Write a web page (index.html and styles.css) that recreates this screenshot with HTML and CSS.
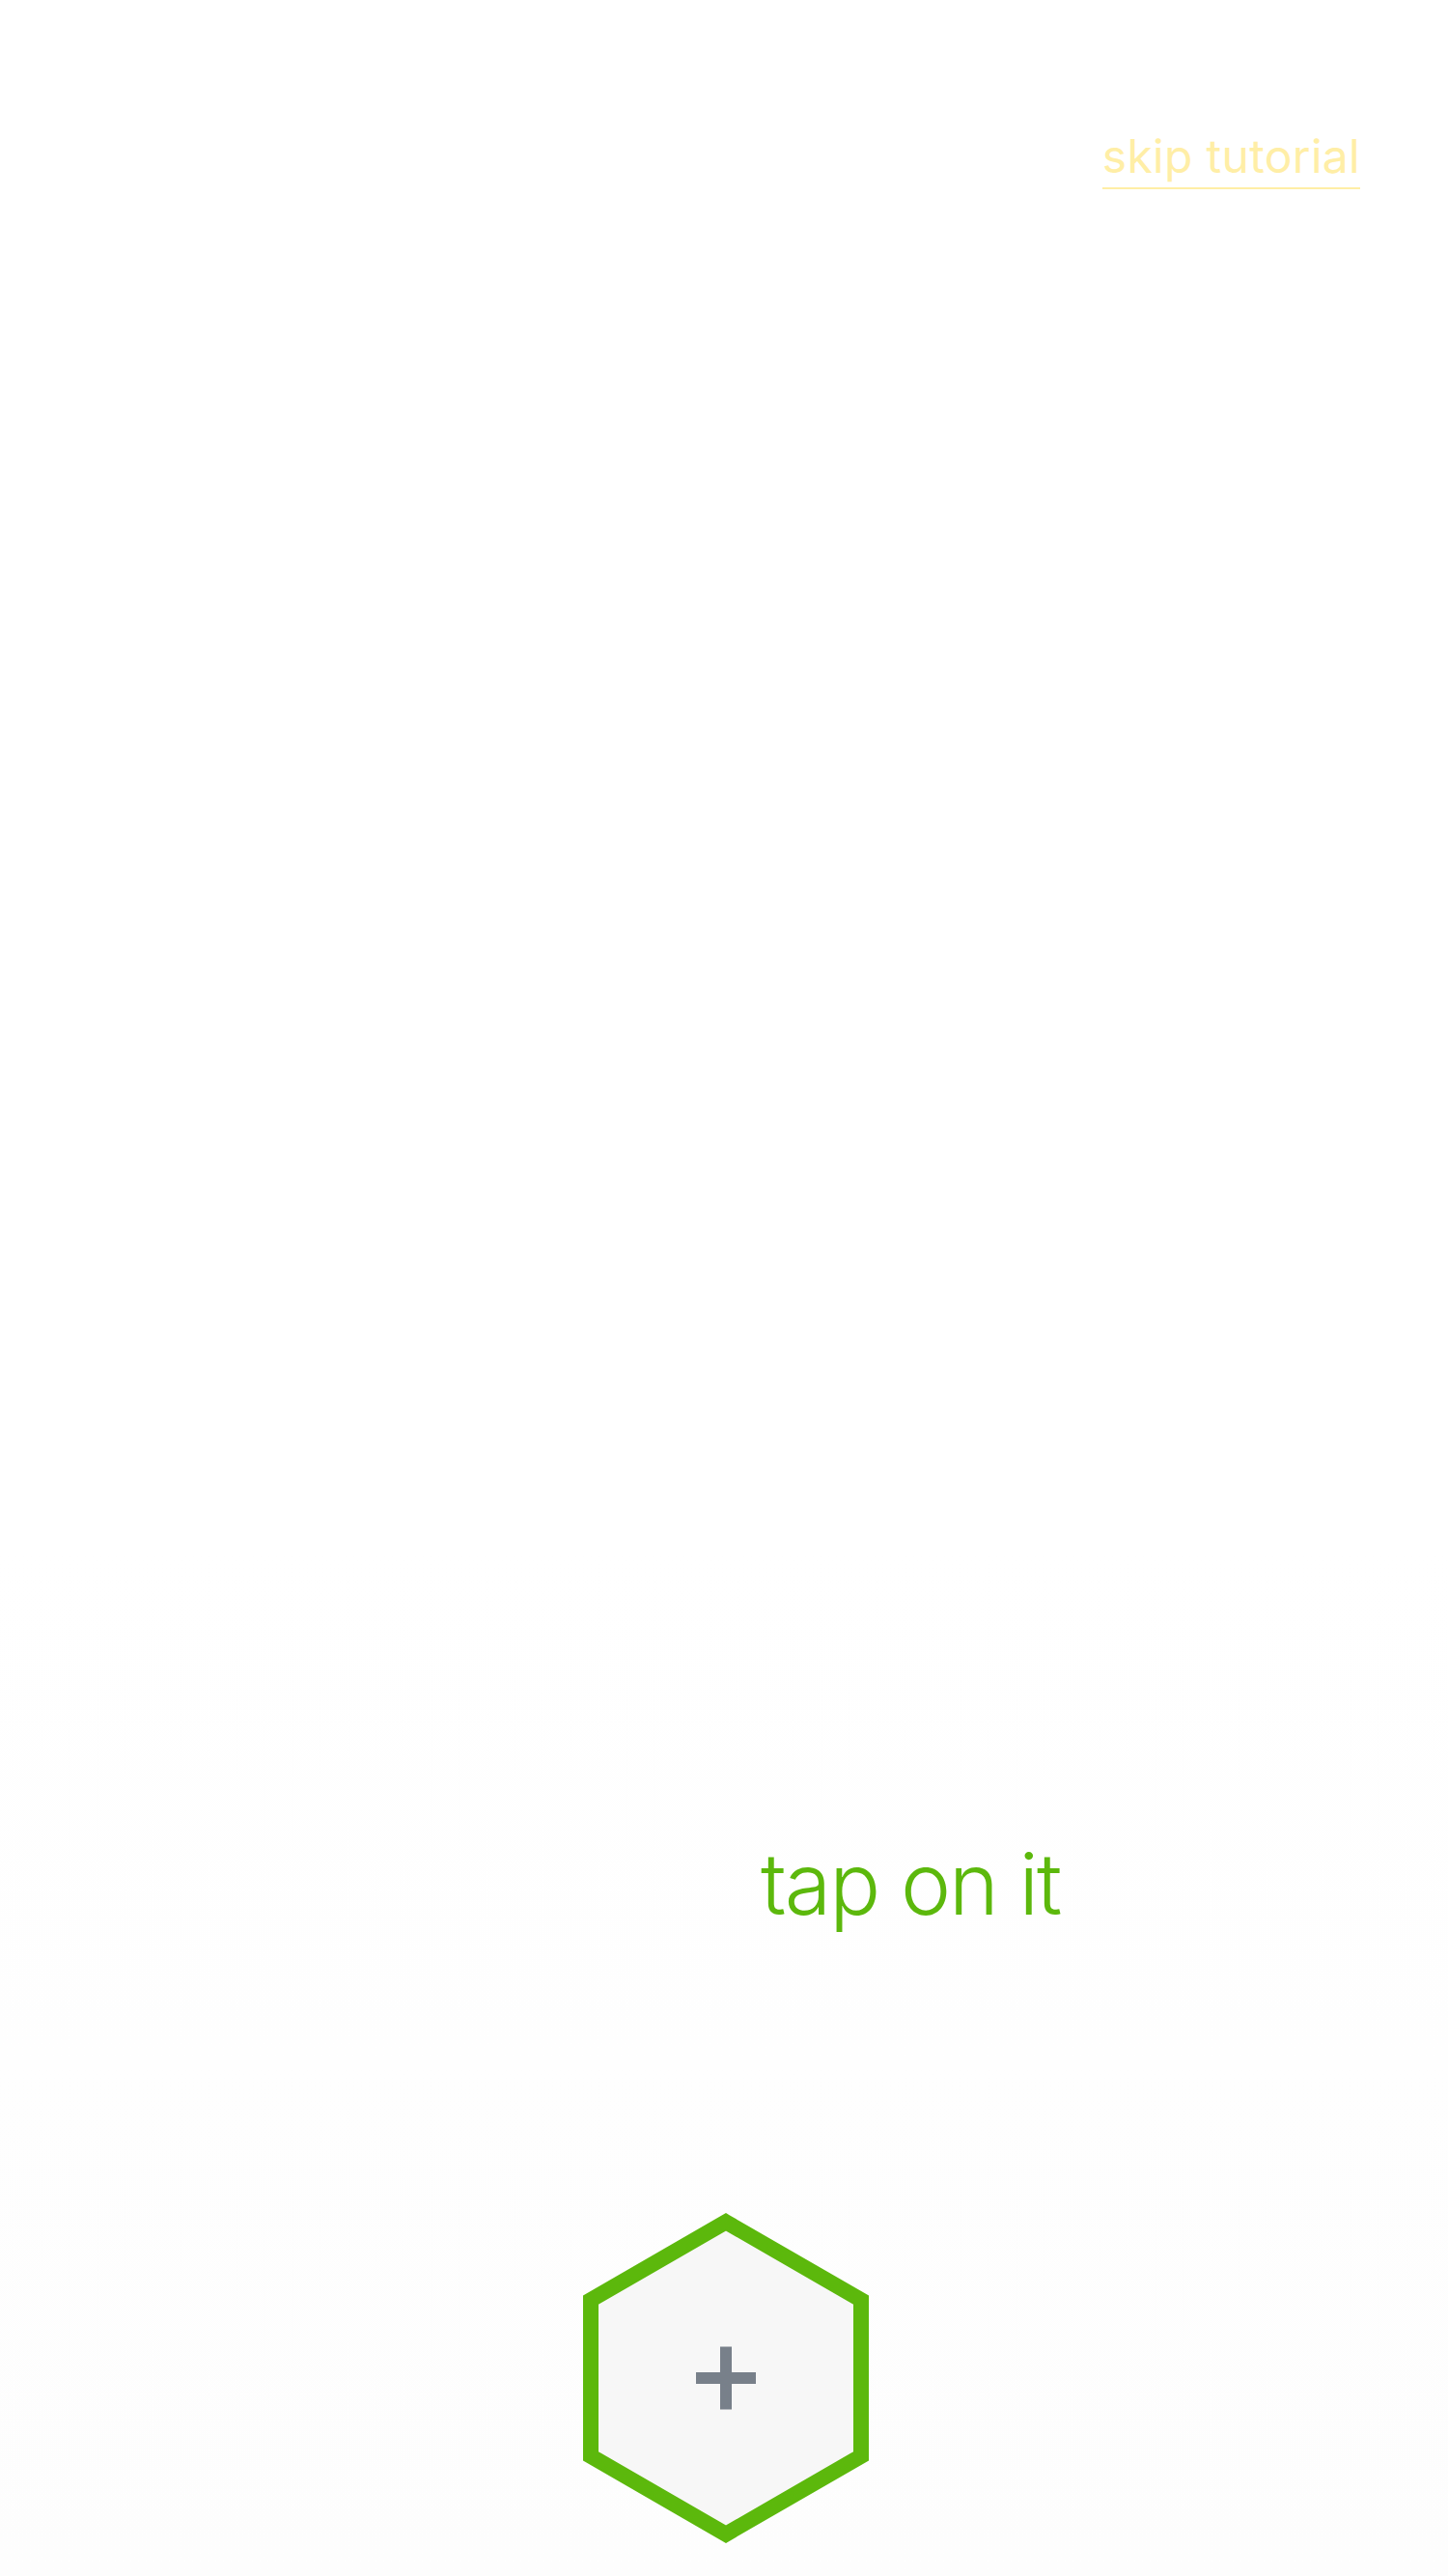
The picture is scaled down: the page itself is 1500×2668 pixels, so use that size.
FILE: index.html
```html
<!DOCTYPE html>
<html lang="en">
<head>
<meta charset="utf-8">
<title>Tutorial</title>
<link rel="stylesheet" href="styles.css">
</head>
<body>
<div class="screen">
  <header class="topbar">
    <a class="skip" href="#">skip tutorial</a>
  </header>
  <p class="hint">tap on it</p>
  <div class="hex-wrap">
    <svg class="hex" width="296" height="342" viewBox="0 0 296 342" aria-label="add">
      <polygon points="148,9.34 288,90.17 288,251.83 148,332.66 8,251.83 8,90.17" fill="#F7F7F7" stroke="#5CB80C" stroke-width="16" stroke-linejoin="miter"/>
      <rect x="117" y="165" width="62" height="12" fill="#78808A"/>
      <rect x="142" y="138.5" width="12" height="65" fill="#78808A"/>
    </svg>
  </div>
</div>
</body>
</html>
```
FILE: styles.css
```css
html, body {
  margin: 0;
  padding: 0;
  background: #ffffff;
}
.screen {
  min-height: 2668px;
  display: flex;
  flex-direction: column;
  background: linear-gradient(to bottom, #ffffff 60%, #fdfdfd 100%);
  font-family: Inter, "Noto Sans", sans-serif;
}
.topbar {
  display: flex;
  justify-content: flex-end;
  padding: 133px 91px 0 0;
}
.skip {
  font-size: 48px;
  line-height: 58px;
  font-weight: 400;
  letter-spacing: 0.3px;
  color: #FFEEA6;
  text-decoration: none;
  border-bottom: 2px solid #FFEEA6;
  padding-bottom: 3px;
}
.hint {
  margin: 1702px 0 0 0;
  padding-left: 788px;
  font-size: 88px;
  line-height: 106px;
  font-weight: 300;
  letter-spacing: -2px;
  color: #5CB80C;
}
.hex-wrap {
  display: flex;
  justify-content: center;
  padding-left: 4px;
  margin-top: 288px;
}
.hex {
  display: block;
}
```
